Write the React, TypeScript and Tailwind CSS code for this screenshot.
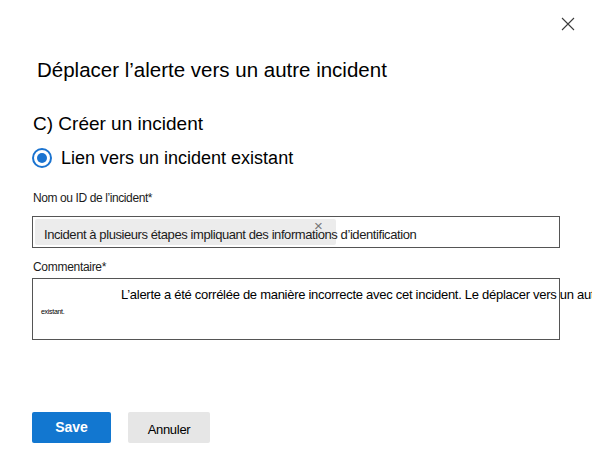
import React from "react";

const font = { fontFamily: '"Liberation Sans", Arial, sans-serif' };

function CloseIcon() {
  return (
    <svg width="14" height="14" viewBox="0 0 14 14" aria-hidden>
      <path d="M1 1L13 13M13 1L1 13" stroke="#3b3b3b" strokeWidth="1.1" fill="none" />
    </svg>
  );
}

export default function App() {
  return (
    <div
      className="relative w-[592px] h-[460px] bg-white text-[#1b1b1b] overflow-hidden"
      style={font}
    >
      <div className="flex justify-end pt-[17px] pr-[17px]">
        <button type="button" className="w-[14px] h-[14px] flex items-center justify-center">
          <CloseIcon />
        </button>
      </div>

      <h1 className="mt-[27px] pl-[37px] text-[20.5px] leading-[24px] font-normal text-black">
        Déplacer l’alerte vers un autre incident
      </h1>

      <div className="px-[32px]">
        <h2 className="mt-[31px] pl-px text-[19px] leading-[22px] text-black">C) Créer un incident</h2>

        <label className="mt-[12px] flex items-center gap-[9px]">
          <span className="w-[20px] h-[20px] rounded-full border-2 border-[#1a73d0] flex items-center justify-center">
            <span className="w-[10px] h-[10px] rounded-full bg-[#1a73d0]" />
          </span>
          <span className="text-[18px] leading-[22px] text-black">Lien vers un incident existant</span>
        </label>

        <div className="mt-[22px] pl-px text-[12px] leading-[15px] tracking-[-0.4px]">
          Nom ou ID de l’incident*
        </div>

        <div className="mt-[10px] w-[528px] h-[32px] border border-[#555] flex items-center pl-[2px]">
          <div className="relative h-[26px] w-[301px] bg-[#ececec] rounded-[2px] flex items-center pl-[9px] pt-[6px] whitespace-nowrap">
            <span className="text-[13px] leading-[16px] tracking-[-0.42px] text-[#1b1b1b]">
              Incident à plusieurs étapes impliquant des informations d’identification
            </span>
            <span className="absolute left-[279px] top-[1px] text-[#777] text-[15px] leading-[12px]">×</span>
          </div>
        </div>

        <div className="mt-[12px] pl-px text-[12px] leading-[15px] tracking-[-0.3px]">Commentaire*</div>

        <div className="mt-[3px] w-[528px] h-[62px] border border-[#555] whitespace-nowrap">
          <div className="pt-[8px] pl-[88px] text-[13px] leading-[16px] tracking-[-0.28px] text-black">
            L’alerte a été corrélée de manière incorrecte avec cet incident. Le déplacer vers un autre
          </div>
          <div className="pt-[5px] pl-[8px] text-[7px] leading-[8px] tracking-[-0.3px] text-black">existant.</div>
        </div>

        <div className="mt-[72px] flex gap-[17px]">
          <button
            type="button"
            className="w-[79px] h-[31px] bg-[#1277d0] rounded-[2px] text-white text-[14px] font-bold"
          >
            Save
          </button>
          <button
            type="button"
            className="w-[82px] h-[31px] bg-[#e6e6e6] rounded-[2px] text-black text-[13px] pt-[4px] tracking-[-0.3px]"
          >
            Annuler
          </button>
        </div>
      </div>
    </div>
  );
}
